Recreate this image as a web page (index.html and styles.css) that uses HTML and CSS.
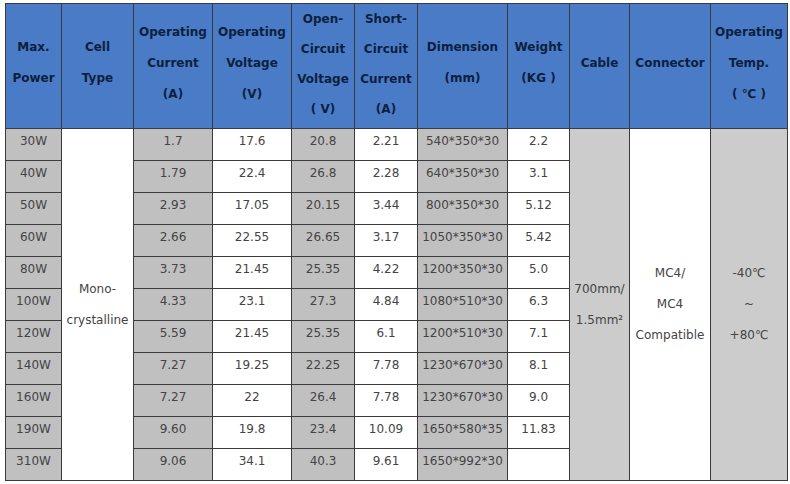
FILE: index.html
```html
<!DOCTYPE html>
<html>
<head>
<meta charset="utf-8">
<link rel="stylesheet" href="styles.css">
</head>
<body>
<div class="wrap">
<table class="spec">
<colgroup>
<col style="width:56px"><col style="width:72px"><col style="width:79px"><col style="width:79px"><col style="width:63px"><col style="width:63px"><col style="width:90px"><col style="width:62px"><col style="width:60px"><col style="width:81px"><col style="width:77px">
</colgroup>
<thead>
<tr>
<th>Max.<br>Power</th>
<th>Cell<br>Type</th>
<th>Operating<br>Current<br>(A)</th>
<th>Operating<br>Voltage<br>(V)</th>
<th class="four">Open-<br>Circuit<br>Voltage<br>( V)</th>
<th class="four">Short-<br>Circuit<br>Current<br>(A)</th>
<th>Dimension<br>(mm)</th>
<th>Weight<br>(KG )</th>
<th>Cable</th>
<th>Connector</th>
<th>Operating<br>Temp.<br>( ℃ )</th>
</tr>
</thead>
<tbody>
<tr><td class="g">30W</td><td class="merge w" rowspan="11">Mono-<br>crystalline</td><td class="g">1.7</td><td>17.6</td><td class="g">20.8</td><td>2.21</td><td class="g">540*350*30</td><td>2.2</td><td class="merge lg" rowspan="11">700mm/<br>1.5mm²</td><td class="merge w" rowspan="11">MC4/<br>MC4<br>Compatible</td><td class="merge lg" rowspan="11">-40℃<br>~<br>+80℃</td></tr>
<tr><td class="g">40W</td><td class="g">1.79</td><td>22.4</td><td class="g">26.8</td><td>2.28</td><td class="g">640*350*30</td><td>3.1</td></tr>
<tr><td class="g">50W</td><td class="g">2.93</td><td>17.05</td><td class="g">20.15</td><td>3.44</td><td class="g">800*350*30</td><td>5.12</td></tr>
<tr><td class="g">60W</td><td class="g">2.66</td><td>22.55</td><td class="g">26.65</td><td>3.17</td><td class="g">1050*350*30</td><td>5.42</td></tr>
<tr><td class="g">80W</td><td class="g">3.73</td><td>21.45</td><td class="g">25.35</td><td>4.22</td><td class="g">1200*350*30</td><td>5.0</td></tr>
<tr><td class="g">100W</td><td class="g">4.33</td><td>23.1</td><td class="g">27.3</td><td>4.84</td><td class="g">1080*510*30</td><td>6.3</td></tr>
<tr><td class="g">120W</td><td class="g">5.59</td><td>21.45</td><td class="g">25.35</td><td>6.1</td><td class="g">1200*510*30</td><td>7.1</td></tr>
<tr><td class="g">140W</td><td class="g">7.27</td><td>19.25</td><td class="g">22.25</td><td>7.78</td><td class="g">1230*670*30</td><td>8.1</td></tr>
<tr><td class="g">160W</td><td class="g">7.27</td><td>22</td><td class="g">26.4</td><td>7.78</td><td class="g">1230*670*30</td><td>9.0</td></tr>
<tr><td class="g">190W</td><td class="g">9.60</td><td>19.8</td><td class="g">23.4</td><td>10.09</td><td class="g">1650*580*35</td><td>11.83</td></tr>
<tr><td class="g">310W</td><td class="g">9.06</td><td>34.1</td><td class="g">40.3</td><td>9.61</td><td class="g">1650*992*30</td><td></td></tr>
</tbody>
</table>
</div>
</body>
</html>
```

FILE: styles.css
```css
html, body {
  margin: 0;
  padding: 0;
  background: #ffffff;
}

.wrap {
  padding: 3px 0 0 5px;
}

.spec {
  border-collapse: collapse;
  table-layout: fixed;
  width: 782px;
  font-family: "DejaVu Sans", Verdana, sans-serif;
  font-size: 12px;
  color: #444444;
}

.spec th,
.spec td {
  border: 1px solid #3a3a3a;
  padding: 0;
  text-align: center;
  white-space: nowrap;
  overflow: hidden;
}

.spec th {
  background: #4a7bc6;
  color: #0d1f3f;
  font-weight: bold;
  line-height: 31px;
  height: 118px;
  padding-bottom: 6px;
  vertical-align: middle;
}

.spec th.four {
  line-height: 30px;
  padding-bottom: 4px;
}

.spec td {
  height: 27px;
  line-height: 16px;
  padding-top: 4px;
  vertical-align: top;
  background: #ffffff;
}

.spec td.g {
  background: #c0c0c0;
}

.spec td.lg {
  background: #cccccc;
}

.spec td.w {
  background: #ffffff;
}

.spec td.merge {
  vertical-align: middle;
  line-height: 31px;
  padding-top: 0;
}
```
